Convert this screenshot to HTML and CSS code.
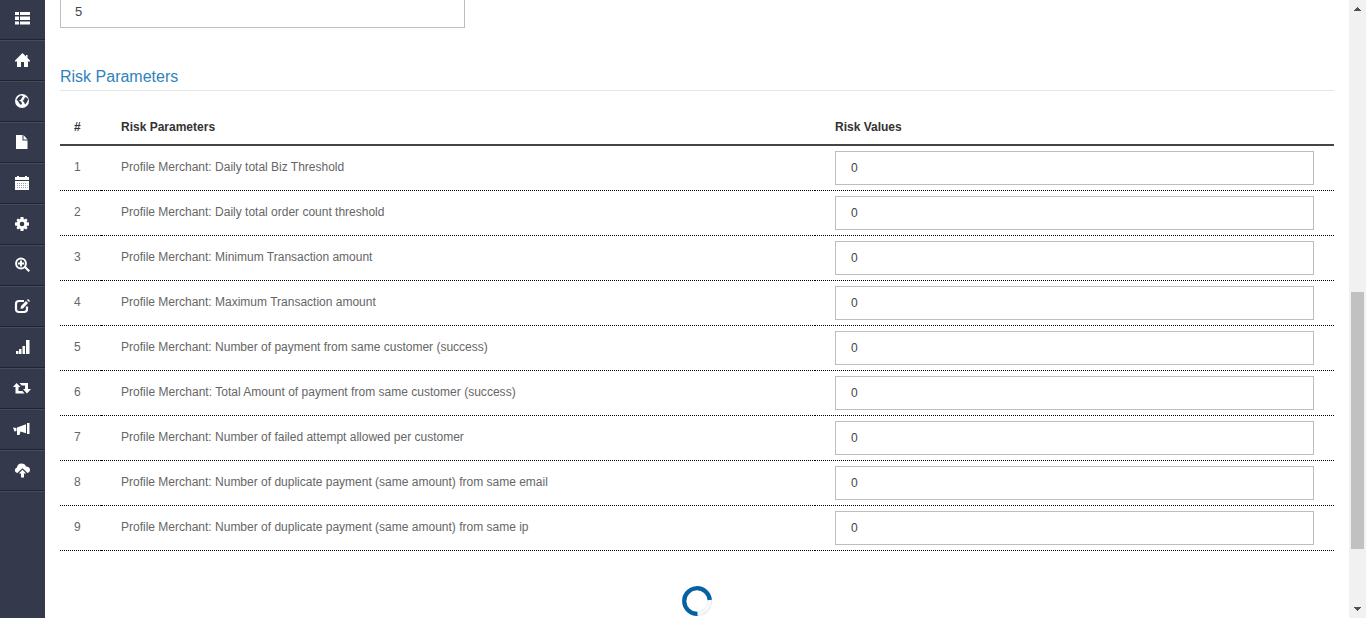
FILE: index.html
```html
<!DOCTYPE html>
<html lang="en">
<head>
<meta charset="utf-8">
<title>Risk Parameters</title>
<link rel="stylesheet" href="styles.css">
</head>
<body>
<div class="app">
  <nav class="sidebar">
    <a class="nav-item"><svg viewBox="0 0 16 16"><path d="M0 2h4v3H0zM5 2h10v3H5zM0 6.500h4v3.500H0zM5 6.500h10v3.500H5zM0 11.500h4v3H0zM5 11.500h10v3H5z"/></svg></a>
    <a class="nav-item"><svg viewBox="0 0 16 16"><path d="M7.500 1L0 8.500V9.500H2V15H6v-5h3v5H13V9.500h2V8.500L12.500 6V3H11v1.500z"/></svg></a>
    <a class="nav-item"><svg viewBox="0 0 16 16"><circle cx="7" cy="8" r="7"/><path class="cut" d="M3 4.500L5.500 2.500l2.500.5-1 1.500-1 2-2 1 2 1 1 2-1 1.500L4 10 3 8 1.500 7zM10 4l2.500 1 .5 2-1.500 3-1.500 1.500-1-2.500L7.500 8 9 6.500z"/></svg></a>
    <a class="nav-item"><svg viewBox="0 0 16 16"><path d="M1 1h6.500v5.500H12.500V15H1zM8.500 1l4 4.500h-4z"/></svg></a>
    <a class="nav-item"><svg viewBox="0 0 16 16"><path d="M0 2h2V1h2v1h6V1h2v1h2v3H0zM0 6h14v9H0z"/><path class="dots" d="M2 8.500h10.500M2 10.500h10.500M2 12.500h10.500"/></svg></a>
    <a class="nav-item"><svg viewBox="0 0 16 16"><circle class="line" cx="7" cy="8" r="3.700" stroke-width="2.800"/><path d="M5.600 1h2.800l.5 3H5.100zM5.600 15h2.800l.5-3H5.100zM0 6.600v2.800l3 .5V6.100zM14 6.600v2.800l-3 .5V6.100zM1.400 4L3 2.400 5.500 4 3 6.500zM12.600 4L11 2.400 8.500 4 11 6.500zM1.400 12L3 13.600 5.500 12 3 9.500zM12.600 12L11 13.600 8.500 12 11 9.500z"/></svg></a>
    <a class="nav-item"><svg viewBox="0 0 16 16"><circle class="line" cx="6" cy="6.500" r="4.900" stroke-width="2"/><path d="M5 3.500h2v2h2v2H7v2H5v-2H3v-2h2zM9 10.500l1.500-1.500 4.500 4.500-1.500 1.500z"/></svg></a>
    <a class="nav-item"><svg viewBox="0 0 16 16"><path class="line" stroke-width="2.200" d="M9 3H4Q1 3 1 6v5q0 3 3 3h5q3 0 3-3V8.500"/><path d="M5.500 11l.5-3 5-5L13 5 8 10.500zM12 2L13 1l2 2-1 1z"/></svg></a>
    <a class="nav-item"><svg viewBox="0 0 16 16"><path d="M1 12h2.500v3H1zM4 10h2.500v5H4zM7.500 7h2.500v8H7.500zM11 1H14.500v14H11z"/></svg></a>
    <a class="nav-item"><svg class="wide" viewBox="0 0 18 16"><path d="M3.500 3l4 4H5.500v4H9.500l2 2.500H2.500V7H0zM6.500 3H15v6h3l-4 4.500-4-4.500h2V5.500H8.700z"/></svg></a>
    <a class="nav-item"><svg viewBox="0 0 16 16"><path d="M-2 6.500L1.500 7v3l-2 .5zM2 6.500l9-3.300v9L5.500 10.500 4.500 14H2zM12 2h2.500v11H12z"/></svg></a>
    <a class="nav-item"><svg viewBox="0 0 16 16"><path d="M2.300 11Q-.5 10 0 7.500.8 5.500 2 5.500 2.500 1.500 6.500 1.500 10 1.500 11 4.500q4 0 4 3.500 0 2.500-2.500 3L7.500 6.300zM7.500 7.700l3.700 3.800H9V15.500H6v-4H3.800z"/></svg></a>
  </nav>
  <main class="content">
    <div class="field">5</div>
    <h3 class="section-title">Risk Parameters</h3>
    <table class="risk-table">
      <colgroup><col class="col-num"><col class="col-name"><col class="col-value"></colgroup>
      <thead><tr><th>#</th><th>Risk Parameters</th><th>Risk Values</th></tr></thead>
      <tbody>
        <tr><td>1</td><td>Profile Merchant: Daily total Biz Threshold</td><td><div class="value">0</div></td></tr>
        <tr><td>2</td><td>Profile Merchant: Daily total order count threshold</td><td><div class="value">0</div></td></tr>
        <tr><td>3</td><td>Profile Merchant: Minimum Transaction amount</td><td><div class="value">0</div></td></tr>
        <tr><td>4</td><td>Profile Merchant: Maximum Transaction amount</td><td><div class="value">0</div></td></tr>
        <tr><td>5</td><td>Profile Merchant: Number of payment from same customer (success)</td><td><div class="value">0</div></td></tr>
        <tr><td>6</td><td class="long">Profile Merchant: Total Amount of payment from same customer (success)</td><td><div class="value">0</div></td></tr>
        <tr><td>7</td><td>Profile Merchant: Number of failed attempt allowed per customer</td><td><div class="value">0</div></td></tr>
        <tr><td>8</td><td>Profile Merchant: Number of duplicate payment (same amount) from same email</td><td><div class="value">0</div></td></tr>
        <tr><td>9</td><td>Profile Merchant: Number of duplicate payment (same amount) from same ip</td><td><div class="value">0</div></td></tr>
      </tbody>
    </table>
    <svg class="spinner" viewBox="0 0 30 30"><circle cx="15" cy="15" r="12.800" fill="none" stroke="#d3e2ee" stroke-width="4.200"/><circle cx="15" cy="15" r="12.600" fill="none" stroke="#f7fafc" stroke-width="3.400"/><path d="M15.500 27.800A12.800 12.800 0 1 1 27.800 14" fill="none" stroke="#0462a3" stroke-width="4.200"/></svg>
  </main>
  <div class="scrollbar">
    <svg class="arrow" viewBox="0 0 7 4"><path d="M3 0h1v1h1v1h1v1h1v1H0V3h1V2h1V1h1z"/></svg>
    <div class="thumb"></div>
    <svg class="arrow" viewBox="0 0 7 4"><path d="M0 0h7v1H6v1H5v1H4v1H3V3H2V2H1V1H0z"/></svg>
  </div>
</div>
</body>
</html>
```
FILE: styles.css
```css
* { box-sizing: border-box; }
body {
  margin: 0;
  background: #fff;
  color: #666;
  font: 12px/18px "Liberation Sans", Arial, sans-serif;
}
.app { display: flex; height: 618px; overflow: hidden; }

.sidebar { width: 45px; flex: none; background: #34394c; }
.nav-item {
  display: flex;
  align-items: center;
  height: 41px;
  padding: 0 0 1px 15px;
  border-top: 1px solid #484c5a;
  border-bottom: 1px solid #20242f;
}
.nav-item:first-child { height: 40px; border-top: 0; padding-bottom: 3px; }
.nav-item:last-child {
  height: 42px;
  padding-bottom: 2px;
  border-bottom-color: #484c5a;
  box-shadow: inset 0 -1px #20242f;
}
.nav-item svg { width: 16px; height: 16px; fill: #fff; overflow: visible; }
.nav-item svg.wide { width: 18px; flex: none; margin-left: -2px; }
.nav-item .cut { fill: #34394c; }
.nav-item .line { fill: none; stroke: #fff; }
.nav-item .dots { fill: none; stroke: #9da0b0; stroke-dasharray: 1 1; }

.content { flex: 1; padding: 0 15px; }
.field {
  width: 405px;
  height: 28px;
  padding: 3px 14px;
  border: 1px solid #bdbdbd;
  border-top: 0;
  color: #444;
  font-size: 13px;
}
.section-title {
  height: 31px;
  margin: 32px 0 18px;
  padding-top: 7px;
  border-bottom: 1px solid #e5e5e5;
  color: #2e83bd;
  font-size: 16px;
  font-weight: 400;
  line-height: 20px;
}
.risk-table { width: 1274px; table-layout: fixed; border-collapse: separate; border-spacing: 0; }
.col-num { width: 41px; }
.col-name { width: 714px; }
.col-value { width: 519px; }
th {
  height: 37px;
  padding: 9px 20px 8px;
  border-bottom: 2px solid #444;
  color: #333;
  text-align: left;
  vertical-align: top;
}
td {
  height: 45px;
  padding: 12px 20px 0;
  border-bottom: 1px dotted #000;
  vertical-align: top;
  white-space: nowrap;
}
.long { letter-spacing: .02px; }
th:first-child, td:first-child { padding-left: 14px; padding-right: 0; }
td:last-child { padding-top: 5px; }
.value { height: 34px; padding: 7px 15px; border: 1px solid #bdbdbd; color: #444; }
.spinner { display: block; width: 30px; height: 30px; margin: 35px auto 0; }

.scrollbar {
  display: flex;
  flex-direction: column;
  align-items: center;
  justify-content: space-between;
  width: 17px;
  padding: 7px 0;
  background: #f1f1f1;
}
.arrow { width: 7px; height: 4px; fill: #505050; }
.thumb { width: 13px; height: 257px; margin-top: 223px; background: #c1c1c1; }
```
